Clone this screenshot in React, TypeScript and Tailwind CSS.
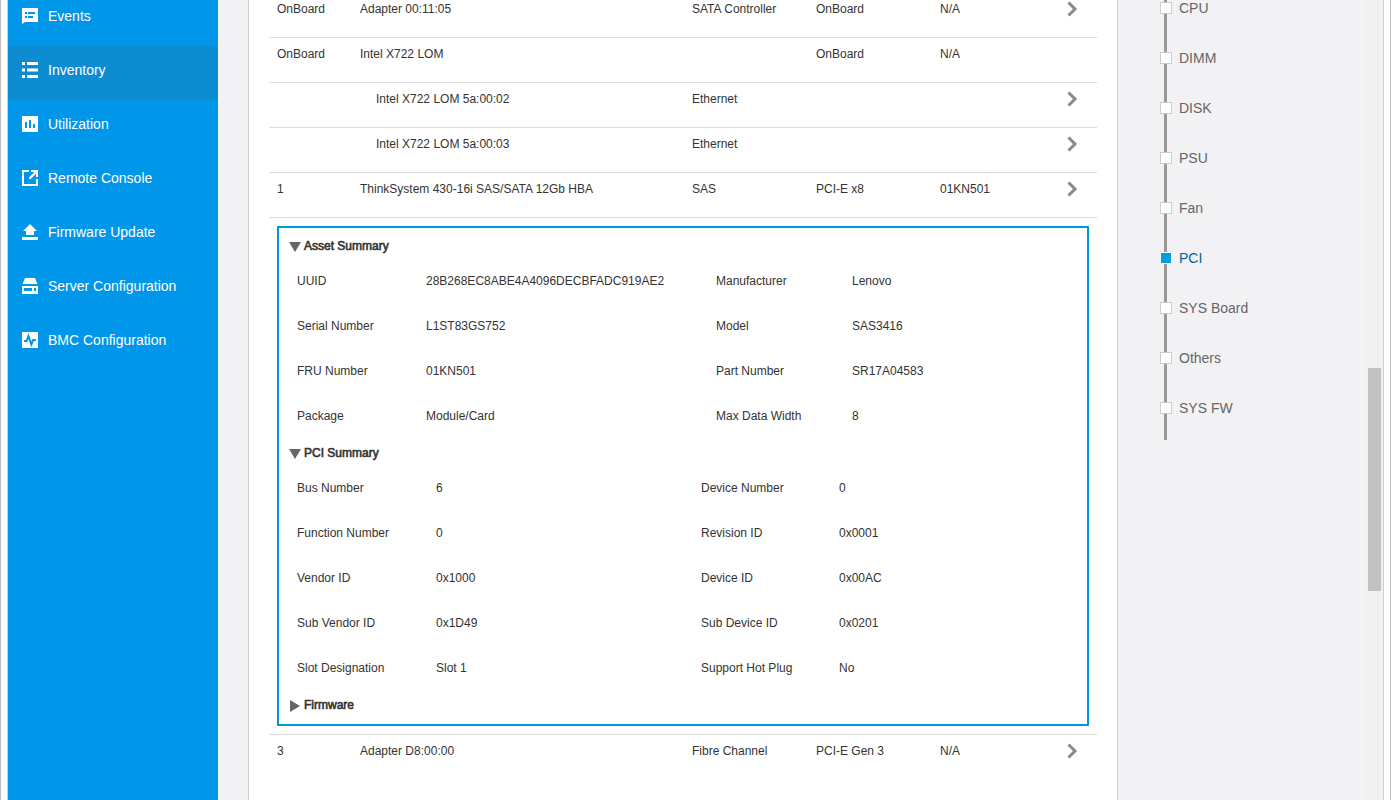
import React from "react";

const navItems = [
  {
    label: "Events",
    d: "M0 0H16V14H3L0 16ZM3 4V6H5V4ZM6 4V6H13V4ZM3 8V10H5V8ZM6 8V10H11V8Z",
  },
  {
    label: "Inventory",
    active: true,
    d: "M0 0H3V3H0ZM5 0H16V3H5ZM0 6.5H3V9.5H0ZM5 6.5H16V9.5H5ZM0 13H3V16H0ZM5 13H16V16H5Z",
  },
  { label: "Utilization", d: "M0 0H16V16H0ZM3 6V12H5V6ZM7 4V12H9V4ZM11 8V12H13V8Z" },
  {
    label: "Remote Console",
    d: "M0 0H7V2H2V14H14V9H16V16H0ZM9 0H16V7H14V3.8L8.2 9.6L6.6 8L12.4 2H9Z",
  },
  { label: "Firmware Update", d: "M8 0L15 7H12V11H4V7H1ZM0 13H16V16H0Z" },
  {
    label: "Server Configuration",
    d: "M3 0H13L15.5 6H0.5ZM0 8H16V16H0ZM2 10V13H10V10ZM12 10V13H14V10Z",
  },
  {
    label: "BMC Configuration",
    d: "M0 0H16V16H0Z",
    line: "M2 9H4.6L6.4 4L9.4 12.4L11.2 8H14",
  },
];

type Row = {
  slot: string;
  name: string;
  type: string;
  iface: string;
  fru: string;
  more: boolean;
  child?: boolean;
};

const rows: Row[] = [
  { slot: "OnBoard", name: "Adapter 00:11:05", type: "SATA Controller", iface: "OnBoard", fru: "N/A", more: true },
  { slot: "OnBoard", name: "Intel X722 LOM", type: "", iface: "OnBoard", fru: "N/A", more: false },
  { slot: "", name: "Intel X722 LOM 5a:00:02", type: "Ethernet", iface: "", fru: "", more: true, child: true },
  { slot: "", name: "Intel X722 LOM 5a:00:03", type: "Ethernet", iface: "", fru: "", more: true, child: true },
  { slot: "1", name: "ThinkSystem 430-16i SAS/SATA 12Gb HBA", type: "SAS", iface: "PCI-E x8", fru: "01KN501", more: true },
];

const lastRow: Row = {
  slot: "3",
  name: "Adapter D8:00:00",
  type: "Fibre Channel",
  iface: "PCI-E Gen 3",
  fru: "N/A",
  more: true,
};

const asset = [
  ["UUID", "28B268EC8ABE4A4096DECBFADC919AE2", "Manufacturer", "Lenovo"],
  ["Serial Number", "L1ST83GS752", "Model", "SAS3416"],
  ["FRU Number", "01KN501", "Part Number", "SR17A04583"],
  ["Package", "Module/Card", "Max Data Width", "8"],
];

const pci = [
  ["Bus Number", "6", "Device Number", "0"],
  ["Function Number", "0", "Revision ID", "0x0001"],
  ["Vendor ID", "0x1000", "Device ID", "0x00AC"],
  ["Sub Vendor ID", "0x1D49", "Sub Device ID", "0x0201"],
  ["Slot Designation", "Slot 1", "Support Hot Plug", "No"],
];

const sections = ["CPU", "DIMM", "DISK", "PSU", "Fan", "PCI", "SYS Board", "Others", "SYS FW"];

const cell = "border-t border-[#dcdcdc] px-2 pt-[7px] align-top";

function DeviceRow({ row }: { row: Row }) {
  return (
    <tr className="h-[45px]">
      <td className={cell}>{row.slot}</td>
      <td className={cell}>{row.child ? <span className="block pl-4">{row.name}</span> : row.name}</td>
      <td className={cell}>{row.type}</td>
      <td className={cell}>{row.iface}</td>
      <td className={cell}>{row.fru}</td>
      <td className={cell}>
        {row.more && (
          <button type="button" aria-label={`Details of ${row.name}`} className="block">
            <svg viewBox="0 0 16 18" className="block h-[18px] w-4" fill="none" stroke="#8a8a8a" strokeWidth="3">
              <path d="M4.5 2.5L11 9L4.5 15.5" />
            </svg>
          </button>
        )}
      </td>
    </tr>
  );
}

function SectionHeading({ label, open }: { label: string; open: boolean }) {
  return (
    <button
      type="button"
      aria-expanded={open}
      className="flex h-[14px] items-center gap-[3px] leading-[14px] [-webkit-text-stroke:0.6px_#333]"
    >
      <svg viewBox="0 0 12 12" className="mt-px h-3 w-3" fill="#666">
        <path d={open ? "M0 1H12L6 11Z" : "M1 0V12L11 6Z"} />
      </svg>
      {label}
    </button>
  );
}

function DetailTable({ data, label, widths }: { data: string[][]; label: string; widths: string[] }) {
  return (
    <table aria-label={label} className="mt-[13px] w-full table-fixed border-separate border-spacing-0 text-left">
      <colgroup>
        {widths.map((w, i) => (
          <col key={i} className={w} />
        ))}
      </colgroup>
      <tbody>
        {data.map((r) => (
          <tr key={r[0]} className="h-[45px]">
            <th scope="row" className="px-2 pt-[6px] align-top font-normal">{r[0]}</th>
            <td className="px-2 pt-[6px] align-top">{r[1]}</td>
            <th scope="row" className="px-2 pt-[6px] align-top font-normal">{r[2]}</th>
            <td className="px-2 pt-[6px] align-top">{r[3]}</td>
          </tr>
        ))}
      </tbody>
    </table>
  );
}

export default function App() {
  return (
    <div className="flex h-screen overflow-hidden border-x border-[#bdbdbd] bg-white px-[6px] font-['Liberation_Sans',Arial,sans-serif] text-xs leading-[18px] text-[#333]">
      <div className="flex min-w-0 flex-1 overflow-hidden border-x border-[#d0d0d0] bg-[#f2f2f5]">
        <nav aria-label="Main" className="w-[210px] shrink-0 bg-[#0096e9]">
          <ul className="-mt-2">
            {navItems.map((item) => (
              <li key={item.label}>
                <a
                  href="#"
                  className={`flex h-[54px] gap-[10px] px-[14px] pt-4 text-sm leading-4 text-white ${item.active ? "bg-[#0d8cd2]" : ""}`}
                >
                  <svg viewBox="0 0 16 16" className="h-4 w-4 shrink-0" fill="#fff" fillRule="evenodd">
                    <path d={item.d} />
                    {item.line && <path d={item.line} fill="none" stroke="#0096e9" strokeWidth="2" />}
                  </svg>
                  {item.label}
                </a>
              </li>
            ))}
          </ul>
        </nav>

        <main className="ml-[30px] min-w-0 flex-1 border-x border-[#d0d0d0] bg-white px-5">
          <table aria-label="PCI devices" className="-mt-2 w-full table-fixed border-separate border-spacing-0">
            <colgroup>
              <col className="w-[83px]" />
              <col className="w-auto" />
              <col className="w-[124px]" />
              <col className="w-[124px]" />
              <col className="w-[124px]" />
              <col className="w-[41px]" />
            </colgroup>
            <tbody>
              {rows.map((row) => (
                <DeviceRow key={row.name} row={row} />
              ))}
              <tr>
                <td colSpan={6} className="border-t border-[#dcdcdc] p-2">
                  <div className="border-2 border-[#0096e0] px-[10px] pt-[11px] pb-3">
                    <SectionHeading label="Asset Summary" open />
                    <DetailTable data={asset} label="Asset Summary" widths={["w-[129px]", "w-[290px]", "w-[136px]", "w-auto"]} />
                    <SectionHeading label="PCI Summary" open />
                    <DetailTable data={pci} label="PCI Summary" widths={["w-[139px]", "w-[265px]", "w-[138px]", "w-auto"]} />
                    <SectionHeading label="Firmware" open={false} />
                  </div>
                </td>
              </tr>
              <DeviceRow row={lastRow} />
            </tbody>
          </table>
        </main>

        <aside className="w-[248px] shrink-0 pl-[42px]">
          <ul className="relative -mt-[17px] pb-[7px] before:absolute before:inset-y-0 before:left-1 before:w-[3px] before:bg-[#999]">
            {sections.map((s) => (
              <li key={s} className="relative">
                <a
                  href="#"
                  className={`flex h-[50px] items-center gap-[7px] text-sm ${s === "PCI" ? "text-[#00629f]" : "text-[#666]"}`}
                >
                  <span className={`h-3 w-3 border ${s === "PCI" ? "border-white bg-[#009fdc]" : "border-[#ccc] bg-white"}`} />
                  {s}
                </a>
              </li>
            ))}
          </ul>
        </aside>

        <div aria-hidden="true" className="w-[17px] shrink-0 bg-[#f0f0f0] px-[2px] pt-[46vh]">
          <div className="h-[223px] bg-[#c1c1c1]" />
        </div>
      </div>
    </div>
  );
}
